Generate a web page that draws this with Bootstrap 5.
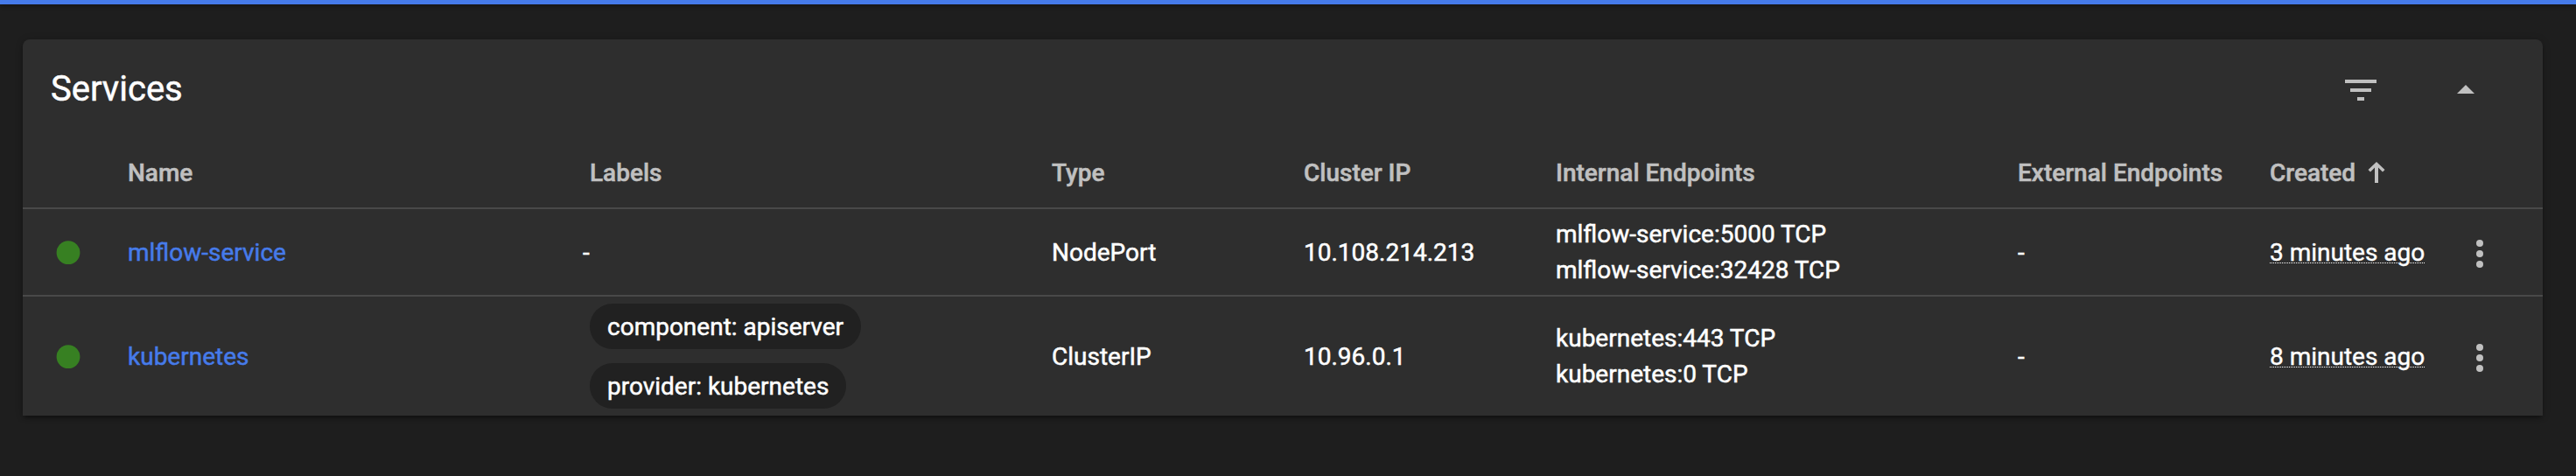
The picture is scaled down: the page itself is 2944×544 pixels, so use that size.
<!DOCTYPE html>
<html lang="en" data-bs-theme="dark">
<head>
<meta charset="utf-8">
<title>Services</title>
<link href="https://cdn.jsdelivr.net/npm/bootstrap@5.3.0/dist/css/bootstrap.min.css" rel="stylesheet">
<style>
  body { background: #1e1e1e; color: #fff; font-family: Roboto, sans-serif; font-size: 28px; line-height: 41px; height: 544px; overflow: hidden; -webkit-text-stroke: .5px currentColor; }
  .progress-line { height: 5px; background: #467bea; box-shadow: 0 2px 5px rgba(0,0,0,.35); }
  .panel { margin: 40px 38px 0 26px; height: 430px; background: #2e2e2e; border-radius: 8px 8px 0 0; box-shadow: 0 4px 4px -2px rgba(0,0,0,.4), 0 1px 8px rgba(0,0,0,.24); }
  .panel-head { height: 116px; padding: 0 64px 0 32px; }
  .panel-title { font-size: 40px; line-height: 48px; font-weight: 400; padding-bottom: 2px; }
  .tools { gap: 72px; }
  svg { display: block; fill: #c0c0c0; }
  .services { table-layout: fixed; width: 2880px; border-collapse: separate; border-spacing: 0; }
  .services th { height: 78px; padding: 0 0 4px; font-weight: 500; color: #c0c0c0; border-bottom: 2px solid #494949; white-space: nowrap; }
  .services td { padding: 0; white-space: nowrap; }
  .services .first td { height: 100px; border-bottom: 2px solid #494949; }
  .services .second td { height: 136px; }
  .status { fill: #378022; margin: 2px 0 0 38px; }
  .services a { color: #467bea; text-decoration: none; }
  .chip { height: 52px; line-height: 53px; padding: 0 20px; border-radius: 26px; background: #212121; }
  .no-label { margin-left: -8px; }
  .age { text-decoration: underline dotted 1px; text-underline-offset: 2px; -webkit-text-stroke-width: .4px; }
  .more { margin: 4px 0 0 8px; }
  .sort-arrow { margin-left: 14px; }
</style>
</head>
<body>
<div class="progress-line"></div>
<main class="panel">
  <header class="panel-head d-flex align-items-center justify-content-between">
    <h1 class="panel-title m-0">Services</h1>
    <div class="tools d-flex">
      <svg width="48" height="48" viewBox="0 0 24 24"><path d="M10 18h4v-2h-4v2zM3 6v2h18V6H3zm3 7h12v-2H6v2z"/></svg>
      <svg width="48" height="48" viewBox="0 0 24 24"><path d="M7 14l5-5 5 5z"/></svg>
    </div>
  </header>
  <table class="services align-middle">
    <colgroup>
      <col style="width:120px"><col style="width:528px"><col style="width:528px"><col style="width:288px"><col style="width:288px"><col style="width:528px"><col style="width:288px"><col style="width:208px"><col style="width:104px">
    </colgroup>
    <thead>
      <tr>
        <th></th><th>Name</th><th>Labels</th><th>Type</th><th>Cluster IP</th><th>Internal Endpoints</th><th>External Endpoints</th>
        <th><div class="d-flex align-items-center">Created
          <svg class="sort-arrow" width="20" height="24" viewBox="0 0 20 24"><path d="M8 24V6.500L3 11.500 .5 9 10 0l9.500 9-2.500 2.500-5-5V24z"/></svg></div></th>
        <th></th>
      </tr>
    </thead>
    <tbody>
      <tr class="first">
        <td><svg class="status" width="28" height="28"><circle cx="14" cy="13.700" r="13.400"/></svg></td>
        <td><a href="#">mlflow-service</a></td>
        <td><div class="no-label">-</div></td>
        <td>NodePort</td>
        <td>10.108.214.213</td>
        <td><div>mlflow-service:5000 TCP</div><div>mlflow-service:32428 TCP</div></td>
        <td>-</td>
        <td><span class="age">3 minutes ago</span></td>
        <td><svg class="more" width="48" height="48" viewBox="0 0 24 24"><circle cx="12" cy="6" r="2"/><circle cx="12" cy="12" r="2"/><circle cx="12" cy="18" r="2"/></svg></td>
      </tr>
      <tr class="second">
        <td><svg class="status" width="28" height="28"><circle cx="14" cy="13.700" r="13.400"/></svg></td>
        <td><a href="#">kubernetes</a></td>
        <td><div class="d-flex flex-column align-items-start gap-3"><span class="chip">component: apiserver</span><span class="chip">provider: kubernetes</span></div></td>
        <td>ClusterIP</td>
        <td>10.96.0.1</td>
        <td><div>kubernetes:443 TCP</div><div>kubernetes:0 TCP</div></td>
        <td>-</td>
        <td><span class="age">8 minutes ago</span></td>
        <td><svg class="more" width="48" height="48" viewBox="0 0 24 24"><circle cx="12" cy="6" r="2"/><circle cx="12" cy="12" r="2"/><circle cx="12" cy="18" r="2"/></svg></td>
      </tr>
    </tbody>
  </table>
</main>
<script src="https://cdn.jsdelivr.net/npm/bootstrap@5.3.0/dist/js/bootstrap.bundle.min.js"></script>
</body>
</html>
